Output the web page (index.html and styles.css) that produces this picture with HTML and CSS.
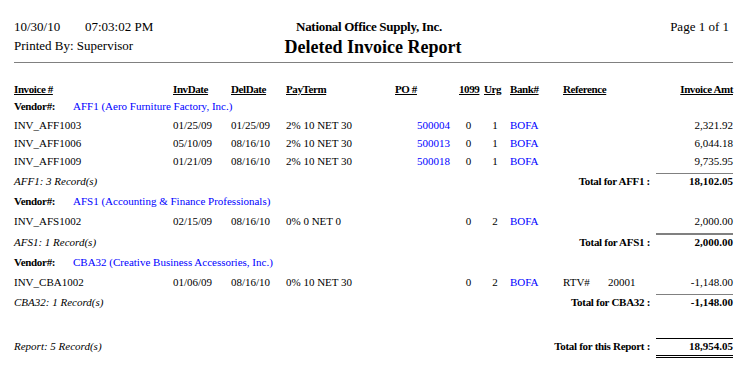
FILE: index.html
```html
<!DOCTYPE html>
<html>
<head>
<meta charset="utf-8">
<link rel="stylesheet" href="styles.css">
</head>
<body>
<div class="page">
  <div class="top">
    <div class="top-left">
      <div class="line1"><span class="date">10/30/10</span><span>07:03:02 PM</span></div>
      <div class="line2">Printed By: Supervisor</div>
    </div>
    <div class="top-center">
      <div class="company">National Office Supply, Inc.</div>
      <div class="title">Deleted Invoice Report</div>
    </div>
    <div class="top-right">Page 1 of 1</div>
  </div>
  <div class="rule"></div>

  <table class="report">
    <colgroup>
      <col class="c1"><col class="c2"><col class="c3"><col class="c4"><col class="c5"><col class="c6"><col class="c7"><col class="c8"><col class="c9"><col class="c10">
    </colgroup>
    <tr class="hdr">
      <td><u>Invoice #</u></td>
      <td><u>InvDate</u></td>
      <td><u>DelDate</u></td>
      <td><u>PayTerm</u></td>
      <td class="po-h"><u>PO #</u></td>
      <td class="t-h"><u>1099</u></td>
      <td class="u-h"><u>Urg</u></td>
      <td class="b-h"><u>Bank#</u></td>
      <td class="r-h"><u>Reference</u></td>
      <td class="amt"><u>Invoice Amt</u></td>
    </tr>

    <tr class="vendor">
      <td colspan="10"><span class="vlabel">Vendor#:</span><span class="blue">AFF1 (Aero Furniture Factory, Inc.)</span></td>
    </tr>
    <tr class="data">
      <td>INV_AFF1003</td><td>01/25/09</td><td>01/25/09</td><td>2% 10 NET 30</td>
      <td class="po blue">500004</td><td class="ctr">0</td><td class="ctr">1</td><td class="bank blue">BOFA</td><td></td><td class="amt">2,321.92</td>
    </tr>
    <tr class="data">
      <td>INV_AFF1006</td><td>05/10/09</td><td>08/16/10</td><td>2% 10 NET 30</td>
      <td class="po blue">500013</td><td class="ctr">0</td><td class="ctr">1</td><td class="bank blue">BOFA</td><td></td><td class="amt">6,044.18</td>
    </tr>
    <tr class="data">
      <td>INV_AFF1009</td><td>01/21/09</td><td>08/16/10</td><td>2% 10 NET 30</td>
      <td class="po blue">500018</td><td class="ctr">0</td><td class="ctr">1</td><td class="bank blue">BOFA</td><td></td><td class="amt">9,735.95</td>
    </tr>
    <tr class="total t1">
      <td colspan="4" class="count">AFF1: 3 Record(s)</td>
      <td colspan="5" class="tlabel">Total for AFF1 :</td>
      <td class="amt tamt">18,102.05</td>
    </tr>

    <tr class="vendor gap">
      <td colspan="10"><span class="vlabel">Vendor#:</span><span class="blue">AFS1 (Accounting &amp; Finance Professionals)</span></td>
    </tr>
    <tr class="data">
      <td>INV_AFS1002</td><td>02/15/09</td><td>08/16/10</td><td>0% 0 NET 0</td>
      <td class="po blue"></td><td class="ctr">0</td><td class="ctr">2</td><td class="bank blue">BOFA</td><td></td><td class="amt">2,000.00</td>
    </tr>
    <tr class="total t2">
      <td colspan="4" class="count">AFS1: 1 Record(s)</td>
      <td colspan="5" class="tlabel">Total for AFS1 :</td>
      <td class="amt tamt thick">2,000.00</td>
    </tr>

    <tr class="vendor gap">
      <td colspan="10"><span class="vlabel">Vendor#:</span><span class="blue">CBA32 (Creative Business Accessories, Inc.)</span></td>
    </tr>
    <tr class="data">
      <td>INV_CBA1002</td><td>01/06/09</td><td>08/16/10</td><td>0% 10 NET 30</td>
      <td class="po blue"></td><td class="ctr">0</td><td class="ctr">2</td><td class="bank blue">BOFA</td><td class="ref"><span class="rtv">RTV#</span>20001</td><td class="amt">-1,148.00</td>
    </tr>
    <tr class="total t3">
      <td colspan="4" class="count">CBA32: 1 Record(s)</td>
      <td colspan="5" class="tlabel">Total for CBA32 :</td>
      <td class="amt tamt">-1,148.00</td>
    </tr>

    <tr class="grand">
      <td colspan="4" class="count">Report: 5 Record(s)</td>
      <td colspan="5" class="tlabel">Total for this Report :</td>
      <td class="amt gamt">18,954.05</td>
    </tr>
  </table>
</div>
</body>
</html>
```

FILE: styles.css
```css
html, body {
  margin: 0;
  padding: 0;
  background: #ffffff;
}
body {
  font-family: "Liberation Serif", "Times New Roman", serif;
  color: #000;
}
.page {
  width: 719px;
  padding: 19px 0 0 14px;
}
.top {
  display: grid;
  grid-template-columns: 200px 1fr 200px;
  align-items: start;
}
.top-left {
  font-size: 13px;
  line-height: 15px;
}
.line1 .date {
  display: inline-block;
  width: 71px;
}
.line2 {
  margin-top: 4px;
}
.top-center {
  text-align: center;
  font-weight: bold;
  padding-right: 9px;
}
.company {
  font-size: 13px;
  line-height: 15px;
  letter-spacing: -0.3px;
}
.title {
  font-size: 18px;
  line-height: 21px;
  margin-top: 3px;
  padding-left: 8px;
}
.top-right {
  font-size: 13px;
  line-height: 15px;
  text-align: right;
  padding-right: 4px;
}
.rule {
  height: 1px;
  background: #808080;
  margin-top: 4px;
}

.report {
  border-collapse: separate;
  border-spacing: 0;
  table-layout: fixed;
  width: 719px;
  margin-top: 20px;
  font-family: "Liberation Serif", "Times New Roman", serif;
  font-size: 11px;
}
.c1 { width: 159px; }
.c2 { width: 58px; }
.c3 { width: 55px; }
.c4 { width: 104px; }
.c5 { width: 65px; }
.c6 { width: 27px; }
.c7 { width: 26px; }
.c8 { width: 54px; }
.c9 { width: 94px; }
.c10 { width: 77px; }

.report td {
  padding: 0;
  white-space: nowrap;
  vertical-align: top;
  line-height: 13px;
  font-family: "Liberation Serif", "Times New Roman", serif;
}
.hdr { height: 17px; }
.hdr td {
  font-weight: bold;
  letter-spacing: -0.4px;
}
.hdr u {
  text-underline-offset: 1px;
}
.po-h { padding-left: 5px !important; }
.t-h { padding-left: 4px !important; }
.u-h { padding-left: 2px !important; }
.b-h { padding-left: 2px !important; }
.r-h { padding-left: 1px !important; }
.amt { text-align: right; }

.vendor { height: 19px; }
.vendor.gap { height: 20px; }
.vlabel {
  display: inline-block;
  width: 59px;
  font-weight: bold;
  letter-spacing: -0.3px;
}
.blue { color: #0000ff; }

.data { height: 18px; }
.po {
  text-align: right;
  padding-right: 5px !important;
}
.ctr { text-align: center; }
.bank { padding-left: 2px !important; }
.ref { padding-left: 1px !important; }
.rtv {
  display: inline-block;
  width: 45px;
}

.total td {
  padding-top: 2px;
}
.total .tamt {
  padding-top: 1px;
  border-top: 1px solid #808080;
  font-weight: bold;
}
.total .tamt.thick {
  padding-top: 1px;
  border-top: 2px solid #808080;
}
.t2 td { padding-top: 3px; }
.t1 { height: 22px; }
.t2 { height: 23px; }
.t3 { height: 44px; }
.count {
  font-style: italic;
}
.tlabel {
  text-align: right;
  font-weight: bold;
  padding-right: 6px !important;
  letter-spacing: -0.3px;
}

.grand { height: 20px; }
.grand td {
  padding-top: 2px;
}
.grand .gamt {
  font-weight: bold;
  padding-top: 1px;
  padding-bottom: 2px;
  border-top: 1px solid #000;
  border-bottom: 3px double #000;
}
```
